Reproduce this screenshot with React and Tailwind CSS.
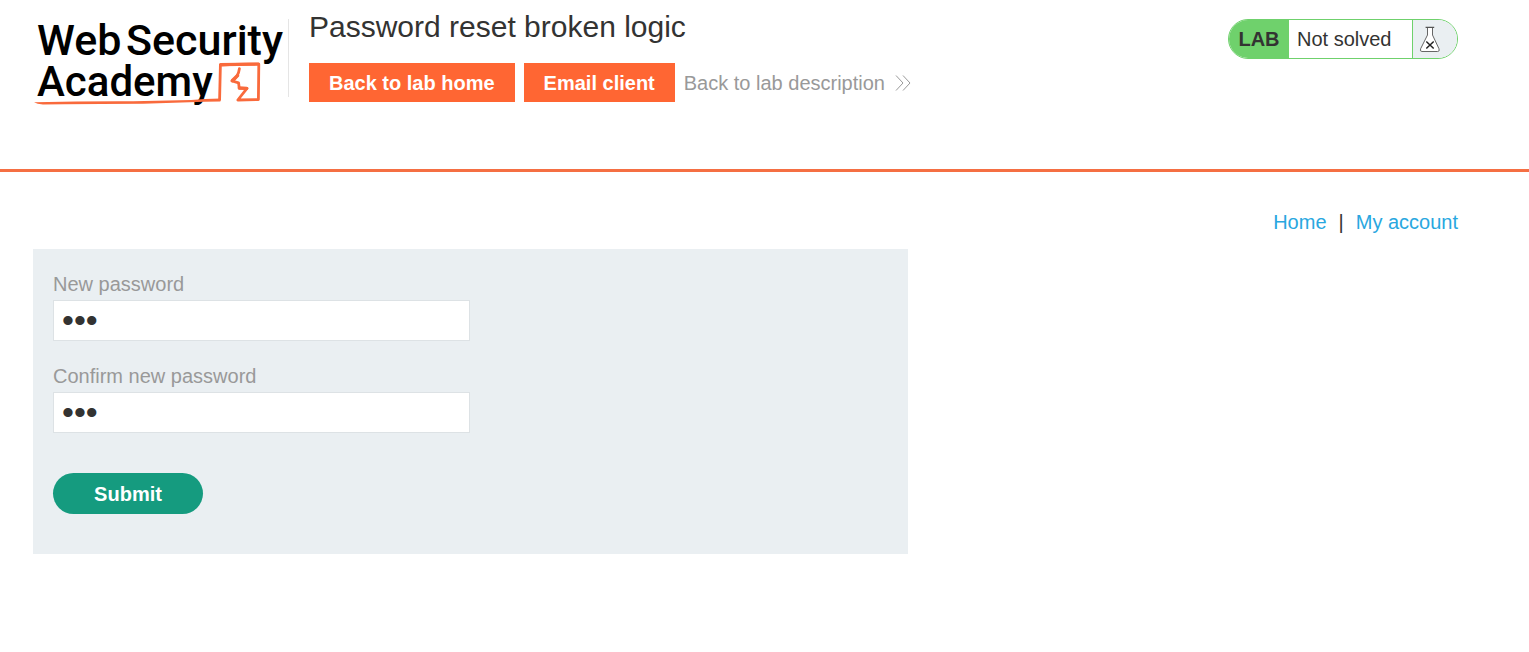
function Logo() {
  return (
    <svg viewBox="0 0 256 96" className="h-24 w-64 shrink-0" role="img" aria-label="Web Security Academy">
      <g fontFamily="Roboto, sans-serif" fontWeight="500" fontSize="43" fill="#000">
        <text x="4" y="41">Web</text>
        <text x="93" y="41">Security</text>
        <text x="4" y="82" fontSize="42">Academy</text>
      </g>
      <g fill="none" stroke="#f96a3c" strokeLinejoin="round" strokeLinecap="round">
        <path d="M186.6 85.6 L187.4 51 Q205 49.8 225.8 50.2 L225.4 85.6 L204.8 86 L214 74.4 L206.2 74.2 L205.6 68.8 L199 67 Q205.4 63 206.4 54.6" strokeWidth="2.8" />
        <path d="M187.6 50.6 L225.4 50" strokeWidth="3.2" />
        <path d="M199.4 66.6 L204.6 61.6 M206.4 74 L213.6 74.4" strokeWidth="3.4" />
      </g>
      <path d="M1 88.2 Q50 87 100 87.2 L158 86 L172 85 L187.4 84.6 L187.4 87.6 L172 87.8 L110 89.8 Q50 90 10 90.4 Q4 90 1 88.2 Z" fill="#f96a3c" />
    </svg>
  );
}

function Flask() {
  return (
    <svg viewBox="0 0 22 28" className="h-7 w-[22px]" aria-hidden="true">
      <path d="M8.5 2.5 V10 L1.6 23.8 Q0.6 26.5 3 26.5 H18.6 Q21 26.5 20 23.8 L13.5 10 V2.5 Z" fill="#fff" stroke="#666" strokeWidth="1" />
      <path d="M6.6 2.4 H15.2" stroke="#555" strokeWidth="1.2" />
      <path d="M7.3 16.5 L14.7 23.5 M14.7 16.5 L7.3 23.5" stroke="#222" strokeWidth="1.5" />
    </svg>
  );
}

function LabStatus() {
  return (
    <div className="flex h-10 shrink-0 overflow-hidden rounded-full border border-[#6fd16c] text-[#333332]">
      <span className="flex w-[60px] items-center justify-center bg-[#6fd16c] font-bold">LAB</span>
      <span className="flex w-[124px] items-center border-r border-[#6fd16c] bg-white pl-2">Not solved</span>
      <span className="flex w-11 items-center bg-[#eaeff2] pl-[6px]">
        <Flask />
      </span>
    </div>
  );
}

function PasswordField({ id, label }) {
  return (
    <div className="flex flex-col pb-5">
      <label htmlFor={id} className="h-[31px] leading-[31px] text-[#999]">{label}</label>
      <input
        id={id}
        type="password"
        defaultValue="abc"
        autoComplete="new-password"
        className="h-[41px] w-full max-w-[417px] border border-[#dde2e5] bg-white px-2 text-[34px] text-[#333332] outline-none"
      />
    </div>
  );
}

export default function App() {
  return (
    <div className="bg-white font-['Liberation_Sans',Arial,sans-serif] text-[20px] leading-6 text-[#333332]">
      <header className="border-b-3 border-[#f56f43] pb-[59px] pl-[33px] pr-[71px]">
        <div className="flex items-start">
          <div className="flex pt-[14px]">
            <Logo />
          </div>
          <div className="-ml-px mt-[19px] h-[78px] w-px shrink-0 bg-[#e5e5e5]" />
          <div className="flex grow flex-col pl-5 pt-[9px]">
            <h1 className="text-[30px] leading-9">Password reset broken logic</h1>
            <div className="mt-[18px] flex items-center gap-[9px]">
              <a href="#home" className="flex h-[39px] items-center bg-[#ff6633] px-5 font-bold text-white">Back to lab home</a>
              <a href="#email" className="flex h-[39px] items-center bg-[#ff6633] px-5 font-bold text-white">Email client</a>
              <a href="#description" className="flex items-center gap-[10px] text-[#999]">
                Back to lab description
                <svg viewBox="0 0 16 16" className="size-4" fill="none" stroke="#999" strokeWidth="1" aria-hidden="true">
                  <path d="M1 0.5 L8 8 L1 15.5 M8 0.5 L15 8 L8 15.5" />
                </svg>
              </a>
            </div>
          </div>
          <div className="pt-[19px]">
            <LabStatus />
          </div>
        </div>
      </header>
      <main className="pb-10 pl-[33px] pr-[71px] pt-[38px]">
        <nav className="flex justify-end gap-3">
          <a href="#home" className="text-[#29a7df]">Home</a>
          <span>|</span>
          <a href="#account" className="text-[#29a7df]">My account</a>
        </nav>
        <form className="mt-[15px] max-w-[875px] bg-[#eaeff2] px-5 pb-10 pt-5" onSubmit={(e) => e.preventDefault()}>
          <PasswordField id="new-password" label="New password" />
          <PasswordField id="confirm-password" label="Confirm new password" />
          <button type="submit" className="mt-5 block h-[41px] w-[150px] rounded-full bg-[#159b7f] font-bold text-white">Submit</button>
        </form>
      </main>
    </div>
  );
}
